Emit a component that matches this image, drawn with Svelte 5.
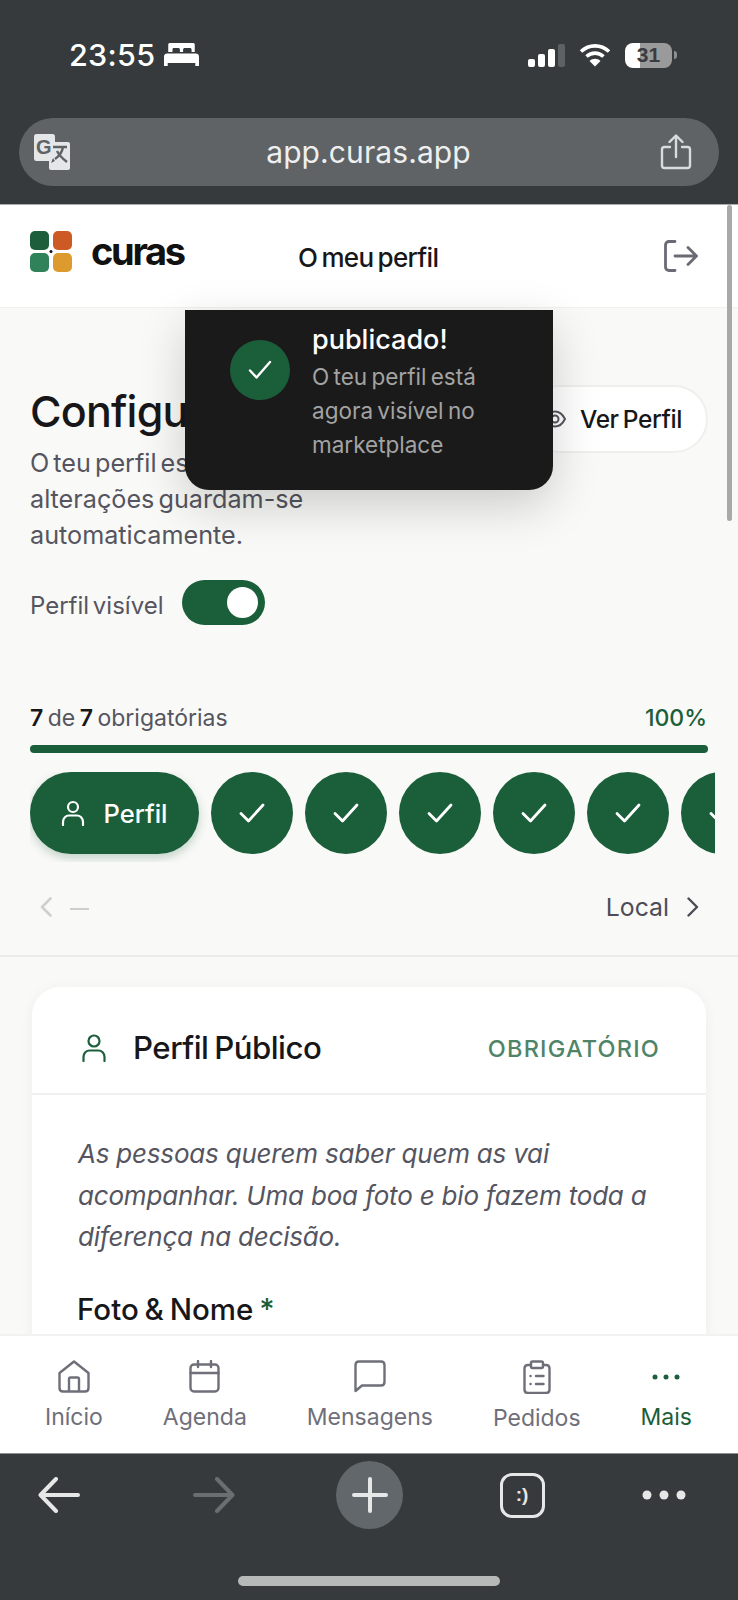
<script>
	const doneSteps = [1, 2, 3, 4, 5, 6]
</script>

<div class="phone">
	<header class="chrome-top">
		<div class="status">
			<div class="clock">
				<span>23:55</span>
				<svg class="bed" width="35" height="23" viewBox="0 0 33 23" preserveAspectRatio="none">
					<path fill="#fff" d="M4 1.5C4 .7 4.7 0 5.5 0h22c.8 0 1.500.7 1.500 1.500V9h-3V6.500c0-.8-.7-1.500-1.500-1.500h-5c-.8 0-1.500.7-1.500 1.500V9h-3V6.500c0-.8-.7-1.500-1.500-1.500h-5C8.700 5 8 5.700 8 6.500V9H4z" />
					<path fill="#fff" d="M3 10.500h27c1.700 0 3 1.300 3 3V23h-3.500v-3h-26v3H0v-9.500c0-1.700 1.300-3 3-3z" />
				</svg>
			</div>
			<div class="indicators">
				<div class="signal">
					<i class="b1"></i><i class="b2"></i><i class="b3"></i><i class="b4"></i>
				</div>
				<svg width="32" height="24" viewBox="0 0 32 24" fill="none" stroke="#fff" stroke-width="3.600" stroke-linecap="butt">
					<path d="M2 8.500C10 1 22 1 30 8.500" />
					<path d="M7.500 13.500c5-4.500 12-4.500 17 0" />
					<path d="M16 23.500l-5.500-5.500c3-3 8-3 11 0z" fill="#fff" stroke="none" />
				</svg>
				<div class="battery"><span>31</span></div>
				<div class="nub"></div>
			</div>
		</div>
		<div class="urlbar">
			<svg width="38" height="38" viewBox="0 0 38 38">
				<rect x="1" y="1" width="21" height="27" rx="2.500" fill="#e4e6e7" />
				<rect x="16" y="9" width="21" height="28" rx="2" fill="#e4e6e7" />
				<path fill="#5f6366" d="M18 30l4-2-2-3z" />
				<text x="3" y="21" class="gtext">G</text>
				<path d="M20 14h14M30 14c-1 6-5 10-8 12M24 18c2 4 6 8 10 11" fill="none" stroke="#5f6366" stroke-width="2.400" />
			</svg>
			<span class="url">app.curas.app</span>
			<svg width="32" height="36" viewBox="0 0 32 36" fill="none" stroke="#d9dcdd" stroke-width="2.400" stroke-linecap="round" stroke-linejoin="round">
				<path d="M10 13H4.500C3 13 2 14 2 15.500v16C2 33 3 34 4.500 34h23c1.500 0 2.500-1 2.500-2.500v-16c0-1.500-1-2.500-2.500-2.500H22" />
				<path d="M16 23V2M9.500 8L16 1.500 22.500 8" />
			</svg>
		</div>
	</header>

	<div class="viewport">
		<div class="appbar">
			<div class="brand">
				<svg width="42" height="41" viewBox="0 0 42 41">
					<rect width="19" height="19" rx="5" fill="#1d5f3c" />
					<rect x="23" width="19" height="19" rx="5" fill="#cd5a24" />
					<rect y="22" width="19" height="19" rx="5" fill="#2f825a" />
					<rect x="23" y="22" width="19" height="19" rx="5" fill="#de9b2d" />
					<circle cx="21" cy="20.500" r="1.500" fill="#111" />
				</svg>
				<span class="wordmark">curas</span>
			</div>
			<h1 class="title">O meu perfil</h1>
			<svg class="logout" width="34" height="32" viewBox="0 0 34 32" fill="none" stroke="#6a6a75" stroke-width="2.800" stroke-linecap="round" stroke-linejoin="round">
				<path d="M11 1.500H5C3 1.500 1.500 3 1.500 5v22c0 2 1.500 3.500 3.500 3.500h6" />
				<path d="M11 16h21M24 7.500l8.500 8.500-8.500 8.500" />
			</svg>
		</div>

		<main class="content">
			<section class="hero">
				<div class="hero-text">
					<h2>Configuração</h2>
					<p>O teu perfil está publicado. As alterações guardam-se automaticamente.</p>
				</div>
				<button class="view-btn">
					<svg width="22" height="18" viewBox="0 0 22 18" fill="none" stroke="#55555f" stroke-width="2">
						<path d="M1 9c2.500-5 6-7.500 10-7.500S18.500 4 21 9c-2.500 5-6 7.500-10 7.500S3.500 14 1 9z" />
						<circle cx="11" cy="9" r="3.500" />
					</svg>
					Ver Perfil
				</button>
			</section>

			<div class="visible-row">
				<span class="visible-label">Perfil visível</span>
				<div class="toggle"><div class="knob"></div></div>
			</div>

			<div class="progress-head">
				<span><b>7</b> de <b>7</b> obrigatórias</span>
				<span class="pct">100%</span>
			</div>
			<div class="bar"></div>

			<div class="steps">
				<div class="step-active">
					<svg width="24" height="26" viewBox="0 0 24 26" fill="none" stroke="#fff" stroke-width="2.200" stroke-linecap="round">
						<circle cx="12" cy="7" r="5" />
						<path d="M2 25v-3c0-4 3-6.500 6-6.500h8c3 0 6 2.500 6 6.500v3" />
					</svg>
					<span>Perfil</span>
				</div>
				{#each doneSteps as step (step)}
					<div class="step-done">
						<svg width="26" height="20" viewBox="0 0 26 20" fill="none" stroke="#fff" stroke-width="2.800" stroke-linecap="round" stroke-linejoin="round">
							<path d="M2 10.500l7.500 7.500L24 2" />
						</svg>
					</div>
				{/each}
			</div>

			<div class="pager">
				<div class="pager-prev">
					<svg width="12" height="20" viewBox="0 0 12 20" fill="none" stroke="#cfcfcf" stroke-width="2.600" stroke-linecap="round" stroke-linejoin="round">
						<path d="M10.500 1.500L2 10l8.500 8.500" />
					</svg>
					<span class="dash"></span>
				</div>
				<div class="pager-next">
					<span>Local</span>
					<svg width="12" height="20" viewBox="0 0 12 20" fill="none" stroke="#4c4c57" stroke-width="2.400" stroke-linecap="round" stroke-linejoin="round">
						<path d="M1.500 1.500L10 10l-8.500 8.500" />
					</svg>
				</div>
			</div>

			<div class="divider"></div>

			<section class="card">
				<div class="card-head">
					<svg width="24" height="28" viewBox="0 0 24 28" fill="none" stroke="#1d5f3c" stroke-width="2.200" stroke-linecap="round">
						<circle cx="12" cy="7" r="5.500" />
						<path d="M1.500 27v-4c0-4 3-6.500 6-6.500h9c3 0 6 2.500 6 6.500v4" />
					</svg>
					<h3>Perfil Público</h3>
					<span class="required">OBRIGATÓRIO</span>
				</div>
				<div class="card-body">
					<p class="intro">As pessoas querem saber quem as vai acompanhar. Uma boa foto e bio fazem toda a diferença na decisão.</p>
					<div class="field-label">Foto &amp; Nome <em>*</em></div>
				</div>
			</section>
		</main>

		<nav class="tabs">
			<div class="tab">
				<svg width="32" height="33" viewBox="0 0 32 33" fill="none" stroke="#6f6f7a" stroke-width="2.400" stroke-linejoin="round">
					<path d="M1.500 13L16 1.500 30.500 13v15c0 2-1.500 3.500-3.500 3.500H5c-2 0-3.500-1.500-3.500-3.500z" />
					<path d="M11 31.500V19c0-1 .8-1.500 1.500-1.500h7c.7 0 1.500.5 1.500 1.500v12.500" />
				</svg>
				<span>Início</span>
			</div>
			<div class="tab">
				<svg width="31" height="33" viewBox="0 0 31 33" fill="none" stroke="#6f6f7a" stroke-width="2.400" stroke-linecap="round">
					<rect x="1.500" y="4.500" width="28" height="27" rx="3.500" />
					<path d="M1.500 13h28M9 1v6M22 1v6" />
				</svg>
				<span>Agenda</span>
			</div>
			<div class="tab">
				<svg width="32" height="33" viewBox="0 0 32 33" fill="none" stroke="#6f6f7a" stroke-width="2.400" stroke-linejoin="round">
					<path d="M1.500 31V5c0-2 1.500-3.500 3.500-3.500h22c2 0 3.500 1.500 3.500 3.500v17c0 2-1.500 3.500-3.500 3.500H8z" />
				</svg>
				<span>Mensagens</span>
			</div>
			<div class="tab">
				<svg width="28" height="34" viewBox="0 0 28 34" fill="none" stroke="#6f6f7a" stroke-width="2.400" stroke-linecap="round" stroke-linejoin="round">
					<path d="M8 5H5C3 5 1.500 6.500 1.500 8.500v21c0 2 1.500 3.500 3.500 3.500h18c2 0 3.500-1.500 3.500-3.500v-21C26.500 6.500 25 5 23 5h-3" />
					<rect x="8" y="1.500" width="12" height="6.500" rx="1.500" />
					<path d="M7.500 16h.1M13 16h7.500M7.500 24h.1M13 24h7.500" />
				</svg>
				<span>Pedidos</span>
			</div>
			<div class="tab active">
				<svg width="30" height="33" viewBox="0 0 30 33" fill="#1d5f3c">
					<circle cx="4" cy="17" r="2.500" />
					<circle cx="15" cy="17" r="2.500" />
					<circle cx="26" cy="17" r="2.500" />
				</svg>
				<span>Mais</span>
			</div>
		</nav>

		<div class="toast">
			<div class="toast-check">
				<svg width="24" height="20" viewBox="0 0 24 20" fill="none" stroke="#fff" stroke-width="2.400" stroke-linecap="round" stroke-linejoin="round">
					<path d="M2 10.500l6.500 7L22 2" />
				</svg>
			</div>
			<div class="toast-text">
				<strong>publicado!</strong>
				<p>O teu perfil está agora visível no marketplace</p>
			</div>
		</div>

		<div class="scrollbar"></div>
	</div>

	<footer class="chrome-bottom">
		<div class="toolbar">
			<svg width="42" height="36" viewBox="0 0 42 36" fill="none" stroke="#e6e8e8" stroke-width="4" stroke-linecap="round" stroke-linejoin="round">
				<path d="M40 18H3M18 2L2.500 18 18 34" />
			</svg>
			<svg width="42" height="36" viewBox="0 0 42 36" fill="none" stroke="#6b6e70" stroke-width="4" stroke-linecap="round" stroke-linejoin="round">
				<path d="M2 18h37M24 2l15.500 16L24 34" />
			</svg>
			<div class="plus">
				<svg width="36" height="36" viewBox="0 0 36 36" fill="none" stroke="#e6e8e8" stroke-width="4" stroke-linecap="round">
					<path d="M18 2v32M2 18h32" />
				</svg>
			</div>
			<div class="tabs-btn">:)</div>
			<svg width="44" height="12" viewBox="0 0 44 12" fill="#e6e8e8">
				<circle cx="5" cy="6" r="4.500" />
				<circle cx="22" cy="6" r="4.500" />
				<circle cx="39" cy="6" r="4.500" />
			</svg>
		</div>
		<div class="home-indicator"></div>
	</footer>
</div>

<style>
	:global(body) {
		margin: 0;
		background: #363a3c;
	}

	.phone {
		display: flex;
		flex-direction: column;
		width: 738px;
		height: 1600px;
		overflow: hidden;
		font-family: Inter, "Noto Sans", sans-serif;
		color: #17171a;
	}

	.chrome-top {
		box-sizing: border-box;
		height: 205px;
		flex: none;
		padding-top: 42px;
		background: #363a3c;
		border-bottom: 1px solid #a9abac;
	}

	.status {
		display: flex;
		justify-content: space-between;
		height: 26px;
		padding: 0 61px 0 69px;
	}

	.clock {
		display: flex;
		align-items: center;
		gap: 9px;
		color: #fff;
		font-size: 30.500px;
		font-weight: 500;
		line-height: 26px;
		letter-spacing: 0.3px;
	}

	.bed {
		margin-top: -2px;
	}

	.indicators {
		display: flex;
		align-items: center;
	}

	.signal {
		display: flex;
		align-items: flex-end;
		gap: 2.500px;
		height: 23px;
		margin-right: 14px;
	}

	.signal i {
		display: block;
		width: 7.500px;
		background: #fff;
		border-radius: 2px;
	}

	.signal .b1 { height: 8px; }
	.signal .b2 { height: 13px; }
	.signal .b3 { height: 18px; }
	.signal .b4 { height: 23px; background: #5d6163; }

	.battery {
		display: flex;
		align-items: center;
		justify-content: center;
		width: 47px;
		height: 25px;
		margin-left: 14px;
		border-radius: 8px;
		background: linear-gradient(90deg, #fff 0 15px, #9a9a9a 15px);
		color: #3a3c40;
		font-family: "Liberation Sans", sans-serif;
		font-size: 21px;
		font-weight: 700;
	}

	.nub {
		width: 3px;
		height: 8px;
		margin-left: 2px;
		border-radius: 0 3px 3px 0;
		background: #8e9090;
	}

	.urlbar {
		display: flex;
		align-items: center;
		justify-content: space-between;
		height: 68px;
		margin: 50px 19px 0;
		padding: 0 27px 0 14px;
		border-radius: 34px;
		background: #5f6366;
	}

	.url {
		margin-left: 6px;
		color: #eef0f0;
		font-size: 30px;
		letter-spacing: 0.1px;
	}

	.gtext {
		font-family: "Liberation Sans", sans-serif;
		font-size: 20px;
		font-weight: 700;
		fill: #5f6366;
	}

	.viewport {
		position: relative;
		display: flex;
		flex: 1;
		flex-direction: column;
		min-height: 0;
		background: #f9f9f7;
	}

	.appbar {
		position: relative;
		display: flex;
		flex: none;
		align-items: center;
		justify-content: space-between;
		box-sizing: border-box;
		height: 103px;
		padding: 0 40px 0 30px;
		background: #fff;
		border-bottom: 1px solid #f1f1ef;
	}

	.brand {
		display: flex;
		align-items: center;
		gap: 19px;
		margin-top: -10px;
	}

	.wordmark {
		font-size: 38px;
		font-weight: 700;
		line-height: 40px;
		letter-spacing: -2.300px;
		color: #111;
	}

	.title {
		position: absolute;
		left: 298px;
		top: 37px;
		margin: 0;
		font-size: 26px;
		font-weight: 500;
		line-height: 32px;
		letter-spacing: -0.700px;
		word-spacing: -2px;
		color: #17171a;
	}

	.content {
		flex: 1;
		min-height: 0;
		overflow: hidden;
	}

	.hero {
		display: flex;
		justify-content: space-between;
		align-items: flex-start;
		padding: 77px 30px 0;
	}

	.hero-text {
		width: 440px;
	}

	.hero-text h2 {
		margin: 0 0 8px;
		font-size: 43px;
		font-weight: 500;
		line-height: 52px;
		letter-spacing: -0.800px;
		white-space: nowrap;
		color: #17171a;
	}

	.hero-text p {
		margin: 0;
		font-size: 25.200px;
		line-height: 36px;
		word-spacing: -3px;
		color: #55555f;
	}

	.view-btn {
		display: flex;
		flex: none;
		align-items: center;
		gap: 14px;
		box-sizing: border-box;
		height: 68px;
		padding: 0 24px 0 17px;
		border: 2px solid #efefed;
		border-radius: 34px;
		background: #fff;
		font-family: inherit;
		font-size: 24.500px;
		font-weight: 500;
		letter-spacing: -0.400px;
		word-spacing: -2px;
		color: #17171a;
	}

	.visible-row {
		display: flex;
		align-items: center;
		gap: 19px;
		margin: 27px 0 0 30px;
		font-size: 24px;
		line-height: 45px;
		word-spacing: -3px;
		color: #55555f;
	}

	.visible-label {
		padding-top: 3px;
		margin-bottom: -3px;
	}

	.toggle {
		display: flex;
		align-items: center;
		justify-content: flex-end;
		box-sizing: border-box;
		width: 83px;
		height: 45px;
		padding-right: 7px;
		border-radius: 23px;
		background: #1b5e3a;
	}

	.knob {
		width: 31px;
		height: 31px;
		border-radius: 50%;
		background: #fff;
	}

	.progress-head {
		display: flex;
		justify-content: space-between;
		margin: 78px 31px 0 30px;
		font-size: 23px;
		line-height: 30px;
		word-spacing: -2px;
		color: #55555f;
	}

	.progress-head b {
		font-weight: 600;
		color: #17171a;
	}

	.pct {
		font-weight: 500;
		color: #1b5e3a;
	}

	.bar {
		height: 8px;
		margin: 12px 30px 0;
		border-radius: 4px;
		background: #1b5e3a;
	}

	.steps {
		display: flex;
		gap: 12px;
		width: 685px;
		height: 90px;
		margin: 19px 0 0 30px;
		overflow: hidden;
	}

	.step-active {
		display: flex;
		flex: none;
		align-items: center;
		justify-content: center;
		gap: 18px;
		width: 169px;
		height: 82px;
		border-radius: 41px;
		background: #1b5e3a;
		box-shadow: 0 4px 10px rgba(27, 94, 58, 0.25);
		font-size: 25.500px;
		font-weight: 500;
		color: #fff;
	}

	.step-done {
		display: flex;
		flex: none;
		align-items: center;
		justify-content: center;
		width: 82px;
		height: 82px;
		border-radius: 50%;
		background: #1b5e3a;
	}

	.pager {
		display: flex;
		align-items: center;
		justify-content: space-between;
		height: 36px;
		margin-top: 27px;
		padding: 0 39px 0 40px;
	}

	.pager-prev {
		display: flex;
		align-items: center;
		gap: 18px;
	}

	.dash {
		width: 19px;
		height: 2px;
		margin-top: 4px;
		background: #cfcfcf;
	}

	.pager-next {
		display: flex;
		align-items: center;
		gap: 18px;
		font-size: 24.800px;
		color: #4c4c57;
	}

	.divider {
		height: 2px;
		margin-top: 30px;
		background: #ebebe9;
	}

	.card {
		margin: 30px 32px 0;
		border-radius: 28px 28px 0 0;
		background: #fff;
		box-shadow: 0 2px 14px rgba(0, 0, 0, 0.05);
	}

	.card-head {
		display: flex;
		align-items: center;
		box-sizing: border-box;
		height: 108px;
		padding: 16px 46px 0 50px;
		border-bottom: 2px solid #f0f0ee;
	}

	.card-head h3 {
		flex: 1;
		margin: 0 0 0 27px;
		font-size: 31.200px;
		font-weight: 500;
		letter-spacing: -0.500px;
		word-spacing: -2px;
		color: #17171a;
	}

	.required {
		font-size: 23.500px;
		font-weight: 500;
		letter-spacing: 1.200px;
		color: #4f8469;
	}

	.card-body {
		padding: 38px 40px 120px 46px;
	}

	.intro {
		margin: 0;
		font-size: 26px;
		font-style: italic;
		line-height: 41.500px;
		letter-spacing: -0.200px;
		color: #55555f;
	}

	.field-label {
		margin: 33px 0 0 -1px;
		font-size: 29.500px;
		font-weight: 500;
		line-height: 36px;
		word-spacing: -2px;
		color: #17171a;
	}

	.field-label em {
		font-style: normal;
		color: #1b5e3a;
	}

	.tabs {
		display: flex;
		flex: none;
		justify-content: space-between;
		box-sizing: border-box;
		height: 119px;
		padding: 24px 46px 0 45px;
		background: #fff;
		border-top: 2px solid #f2f2f0;
	}

	.tab {
		display: flex;
		flex-direction: column;
		align-items: center;
		gap: 9px;
		font-size: 23px;
		line-height: 30px;
		color: #6f6f7a;
	}

	.tab.active {
		color: #1b5e3a;
	}

	.toast {
		position: absolute;
		left: 185px;
		top: 105px;
		display: flex;
		align-items: flex-start;
		gap: 22px;
		box-sizing: border-box;
		width: 368px;
		height: 180px;
		padding: 30px 20px 0 45px;
		border-radius: 0 0 24px 24px;
		background: #1a1a1a;
		box-shadow: 0 16px 48px rgba(0, 0, 0, 0.18);
		color: #fff;
	}

	.toast-check {
		display: flex;
		flex: none;
		align-items: center;
		justify-content: center;
		width: 60px;
		height: 60px;
		border-radius: 50%;
		background: #1b5e3a;
	}

	.toast-text {
		margin-top: -17px;
	}

	.toast-text strong {
		display: block;
		font-size: 27px;
		font-weight: 500;
		line-height: 34px;
	}

	.toast-text p {
		margin: 3px 0 0;
		font-size: 22.500px;
		line-height: 34px;
		word-spacing: -2px;
		color: #a3a3a3;
	}

	.scrollbar {
		position: absolute;
		top: 0;
		left: 727px;
		width: 5px;
		height: 316px;
		border-radius: 3px;
		background: #a9a9a9;
	}

	.chrome-bottom {
		flex: none;
		box-sizing: border-box;
		height: 147px;
		padding-top: 7px;
		background: #363a3c;
		border-top: 1px solid #8c8e8f;
	}

	.toolbar {
		display: grid;
		grid-template-columns: 118px 192px 119px 186px 98px;
		justify-items: center;
		align-items: center;
		height: 68px;
	}

	.plus {
		display: flex;
		align-items: center;
		justify-content: center;
		width: 67px;
		height: 68px;
		border-radius: 50%;
		background: #62676b;
	}

	.tabs-btn {
		display: flex;
		align-items: center;
		justify-content: center;
		box-sizing: border-box;
		width: 45px;
		height: 45px;
		border: 3px solid #e6e8e8;
		border-radius: 12px;
		font-family: "Liberation Sans", sans-serif;
		font-size: 19px;
		font-weight: 700;
		color: #e6e8e8;
	}

	.home-indicator {
		width: 262px;
		height: 10px;
		margin: 47px auto 0;
		border-radius: 5px;
		background: #b7b8b8;
	}
</style>
